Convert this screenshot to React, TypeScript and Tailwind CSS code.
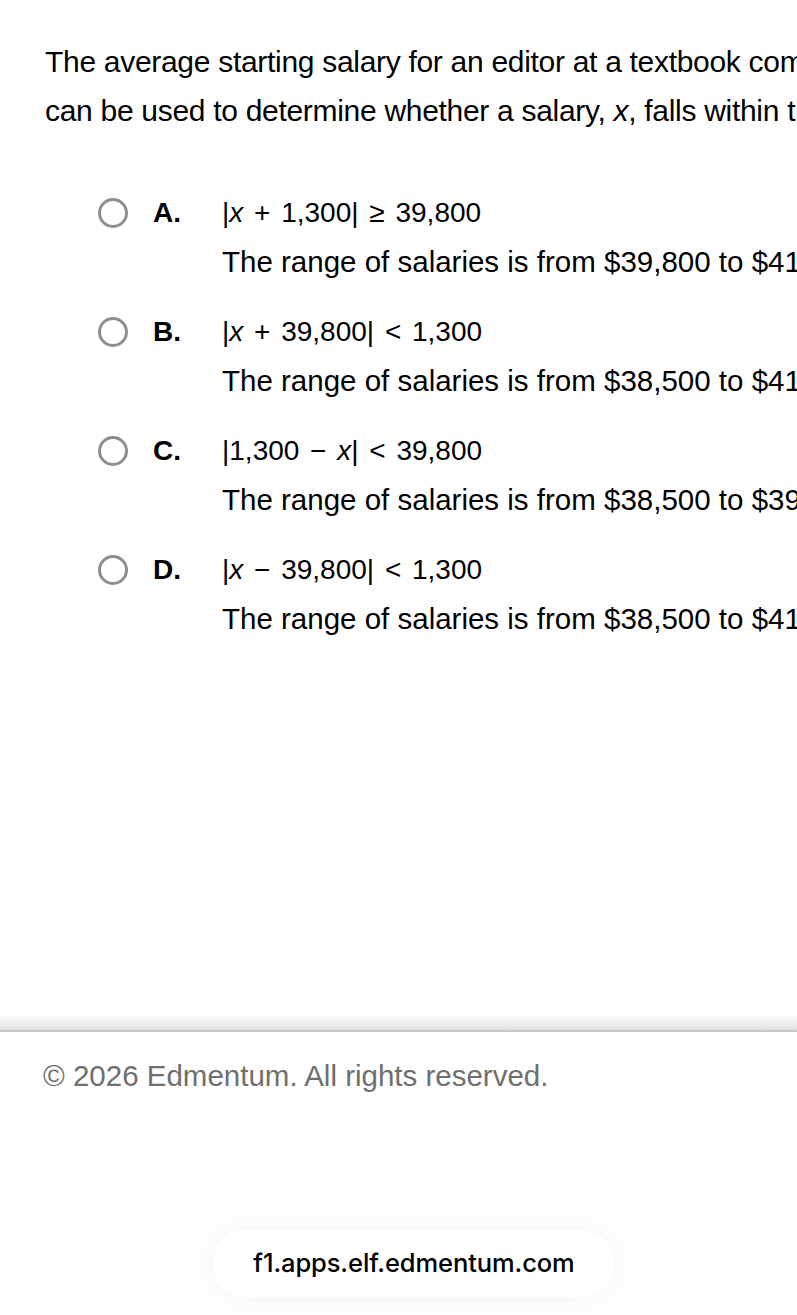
import React from 'react'

const options = [
  {
    letter: 'A.',
    expr: (
      <>
        |<i>x</i> + 1,300| ≥ 39,800
      </>
    ),
    range: 'The range of salaries is from $39,800 to $41,100.',
  },
  {
    letter: 'B.',
    expr: (
      <>
        |<i>x</i> + 39,800| &lt; 1,300
      </>
    ),
    range: 'The range of salaries is from $38,500 to $41,100.',
  },
  {
    letter: 'C.',
    expr: (
      <>
        |1,300 − <i>x</i>| &lt; 39,800
      </>
    ),
    range: 'The range of salaries is from $38,500 to $39,800.',
  },
  {
    letter: 'D.',
    expr: (
      <>
        |<i>x</i> − 39,800| &lt; 1,300
      </>
    ),
    range: 'The range of salaries is from $38,500 to $41,100.',
  },
]

export default function App() {
  return (
    <div className="relative w-[797px] h-[1315px] overflow-hidden bg-white text-black font-['Liberation_Sans',Arial,sans-serif]">
      <div className="pt-[37px] pl-[45px] whitespace-nowrap">
        <p className="text-[30px] leading-[49px] tracking-[-0.3px]">
          The average starting salary for an editor at a textbook company is $39,800, give or take $1,300. Which inequality
        </p>
        <p className="text-[30px] leading-[49px] tracking-[-0.3px]">
          can be used to determine whether a salary, <i>x</i>, falls within the range of salaries?
        </p>
      </div>

      <div className="mt-[53px] pl-[98px] flex flex-col gap-[21px] whitespace-nowrap">
        {options.map((o) => (
          <div key={o.letter} className="flex">
            <div className="h-[49px] flex items-center shrink-0">
              <span className="block w-[30px] h-[30px] rounded-full border-[3px] border-[#8e8e8e]" />
            </div>
            <span className="ml-[25px] w-[69px] shrink-0 text-[28px] leading-[49px] font-bold">{o.letter}</span>
            <div className="flex flex-col shrink-0">
              <span className="text-[28px] leading-[49px] [word-spacing:3px]">{o.expr}</span>
              <span className="text-[29.5px] leading-[49px]">{o.range}</span>
            </div>
          </div>
        ))}
      </div>

      <div className="absolute left-0 right-0 top-[1030px]">
        <div className="h-[16px] -mt-[16px] bg-gradient-to-b from-transparent to-[#e2e2e2]" />
        <div className="h-[2px] bg-[#c9c9c9]" />
        <p className="pl-[43px] pt-[24px] text-[29.5px] leading-[40px] text-[#6f6f6f]">
          © 2026 Edmentum. All rights reserved.
        </p>
      </div>

      <div className="absolute left-[213px] top-[1230px] w-[402px] h-[67px] rounded-full bg-white shadow-[0_0_40px_rgba(0,0,0,0.06)] flex items-center justify-center">
        <span className="text-[25.5px] font-medium font-['Inter',sans-serif] tracking-[-0.1px]">f1.apps.elf.edmentum.com</span>
      </div>
    </div>
  )
}
